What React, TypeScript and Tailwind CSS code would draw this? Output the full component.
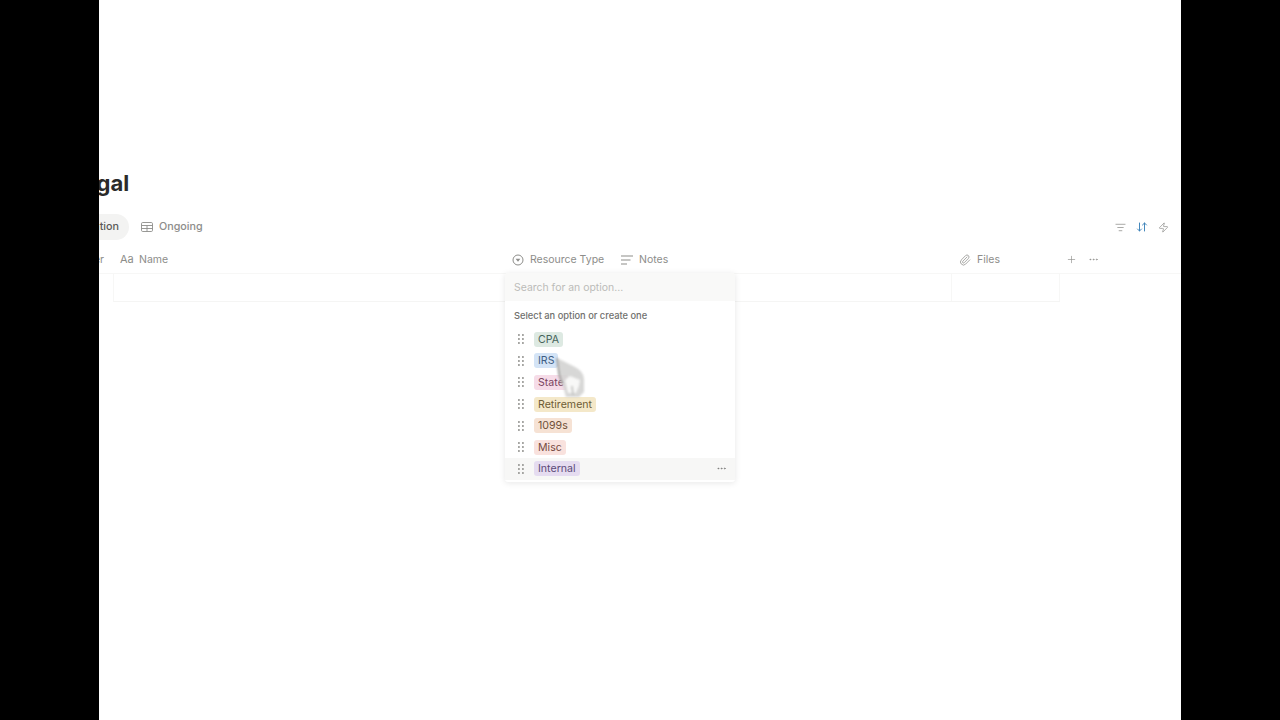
import React from "react";
import { Paperclip, Plus, Ellipsis, ListFilter, ArrowDownUp, Zap } from "lucide-react";

const options = [
  { label: "CPA", bg: "bg-[#dde9e2]", fg: "text-[#45635a]" },
  { label: "IRS", bg: "bg-[#d4e4f6]", fg: "text-[#3f5e84]" },
  { label: "State", bg: "bg-[#f6dce8]", fg: "text-[#7a4460]" },
  { label: "Retirement", bg: "bg-[#f4e8c9]", fg: "text-[#6e5c36]" },
  { label: "1099s", bg: "bg-[#f6e2d4]", fg: "text-[#6f5039]" },
  { label: "Misc", bg: "bg-[#f9e2de]", fg: "text-[#764a42]" },
  { label: "Internal", bg: "bg-[#e5dcf0]", fg: "text-[#5c4a78]" },
];

function Grip() {
  return (
    <svg width="6" height="10" viewBox="0 0 6 10" className="shrink-0 text-[#8f8f8c]" fill="currentColor">
      {[1, 5, 9].map((y) => (
        <React.Fragment key={y}>
          <rect x="0" y={y - 0.8} width="1.8" height="1.6" />
          <rect x="4" y={y - 0.8} width="1.8" height="1.6" />
        </React.Fragment>
      ))}
    </svg>
  );
}

function TableIcon() {
  return (
    <svg width="12" height="10" viewBox="0 0 12 10" fill="none" stroke="currentColor" strokeWidth="0.9">
      <rect x="0.5" y="0.5" width="11" height="9" rx="1.2" />
      <path d="M0.5 3.5H11.5M0.5 6.5H11.5M6 3.5V9.5" />
    </svg>
  );
}

function SelectIcon() {
  return (
    <svg width="12" height="12" viewBox="0 0 12 12" fill="none" stroke="currentColor" strokeWidth="1">
      <circle cx="6" cy="6" r="5" />
      <path d="M3.6 4.8H8.4L6 7.8Z" fill="currentColor" stroke="none" />
    </svg>
  );
}

function TextIcon() {
  return (
    <svg width="12" height="10" viewBox="0 0 12 10" fill="none" stroke="currentColor" strokeWidth="1.1">
      <path d="M0 1H12M0 5H9.5M0 9H6" />
    </svg>
  );
}

export default function App() {
  return (
    <div className="flex h-[720px] w-[1280px] overflow-hidden bg-black font-['Inter','Liberation_Sans',sans-serif]">
      <div className="w-[99px] shrink-0" />
      <div className="relative w-[1082px] shrink-0 overflow-hidden bg-white">
        <div className="flex h-[198px] items-end">
          <h1 className="ml-[-28px] text-[22px] font-bold leading-[29px] text-[#2b2b2a]">Legal</h1>
        </div>

        <div className="mt-[13px] flex h-[32px] items-center justify-between pr-[12px]">
          <div className="flex items-center">
            <div className="ml-[-60px] flex h-[26px] w-[90px] items-center justify-end rounded-full bg-[#f3f3f2] pr-[10px] text-[10.75px] font-medium text-[#5a5a58]">
              Location
            </div>
            <div className="ml-[12px] flex items-center gap-[6px] text-[10.75px] font-medium text-[#8d8d8a]">
              <TableIcon />
              <span>Ongoing</span>
            </div>
          </div>
          <div className="flex items-center gap-[10px]">
            <ListFilter size={11} strokeWidth={1.6} className="text-[#8b8b88]" />
            <ArrowDownUp size={12} strokeWidth={1.9} className="text-[#3b82b8]" />
            <Zap size={11} strokeWidth={1.5} className="text-[#8b8b88]" />
          </div>
        </div>

        <div className="mt-[3px] flex h-[28px] items-center border-b border-[#f7f7f6] text-[10.5px] text-[#8d8d8a]">
          <span className="ml-[-16px] w-[21px] text-right">er</span>
          <div className="ml-[16px] flex w-[392px] items-center gap-[5px]">
            <span className="w-[14px] text-[11px]">Aa</span>
            <span>Name</span>
          </div>
          <div className="flex w-[109px] items-center gap-[6px]">
            <SelectIcon />
            <span className="whitespace-nowrap">Resource Type</span>
          </div>
          <div className="flex w-[338px] items-center gap-[6px]">
            <TextIcon />
            <span>Notes</span>
          </div>
          <div className="flex w-[107px] items-center gap-[6px]">
            <Paperclip size={12} strokeWidth={1.5} />
            <span>Files</span>
          </div>
          <Plus size={11} strokeWidth={1.4} />
          <Ellipsis size={11} strokeWidth={1.6} className="ml-[11px]" />
        </div>

        <div className="ml-[14px] flex h-[28px] w-[947px] border-b border-[#f5f5f4] border-l border-l-[#f7f7f6]">
          <div className="ml-auto h-full w-[109px] border-x border-[#f7f7f6]" />
        </div>

        {/* Select menu over the table */}
        <div className="absolute left-[406px] top-[273px] w-[230px] overflow-hidden rounded-[3px] bg-white pb-[2px] shadow-[0_1px_6px_rgba(15,15,15,0.1)]">
          <div className="flex h-[28px] items-center bg-[#f9f9f8] pl-[9px] pt-[1px] text-[10.45px] text-[#bcbcb9]">
            Search for an option...
          </div>
          <div className="flex h-[24px] items-end pl-[9px] pb-[2px] text-[9.3px] font-medium text-[#70706d]">
            Select an option or create one
          </div>
          <div className="pt-[3.5px]">
            {options.map((o, i) => (
              <div
                key={o.label}
                className={`flex h-[21.6px] items-center pl-[12.5px] pr-[8px] ${i === 6 ? "bg-[#f7f7f6]" : ""}`}
              >
                <Grip />
                <span className={`ml-[10.5px] rounded-[3px] px-[4px] py-[1px] text-[10.6px] leading-[13px] ${o.bg} ${o.fg}`}>
                  {o.label}
                </span>
                {i === 6 && <Ellipsis size={11} strokeWidth={1.6} className="ml-auto text-[#777774]" />}
              </div>
            ))}
          </div>
        </div>

        {/* Hand cursor, blurred by the recording */}
        <svg
          width="30"
          height="42"
          viewBox="0 0 30 42"
          className="absolute left-[457px] top-[356px] blur-[1px]"
        >
          <path
            d="M1 2 L17 10 C25 14 28 18 28 24 L28 36 L23 41 L10 41 L7 30 C4 22 1 12 1 2 Z"
            fill="#d3d3d1"
            opacity="0.9"
          />
          <path d="M1 2 L3 18 L6 28" fill="none" stroke="#9a9a98" strokeWidth="1.6" />
          <path d="M9 24 L14 20 L24 24 L23 30 L20 37 L12 37 Z" fill="#f8f8f7" />
          <path d="M16 30 L17 39" stroke="#bdbdbb" strokeWidth="1.5" />
        </svg>
      </div>
      <div className="w-[99px] shrink-0" />
    </div>
  );
}
